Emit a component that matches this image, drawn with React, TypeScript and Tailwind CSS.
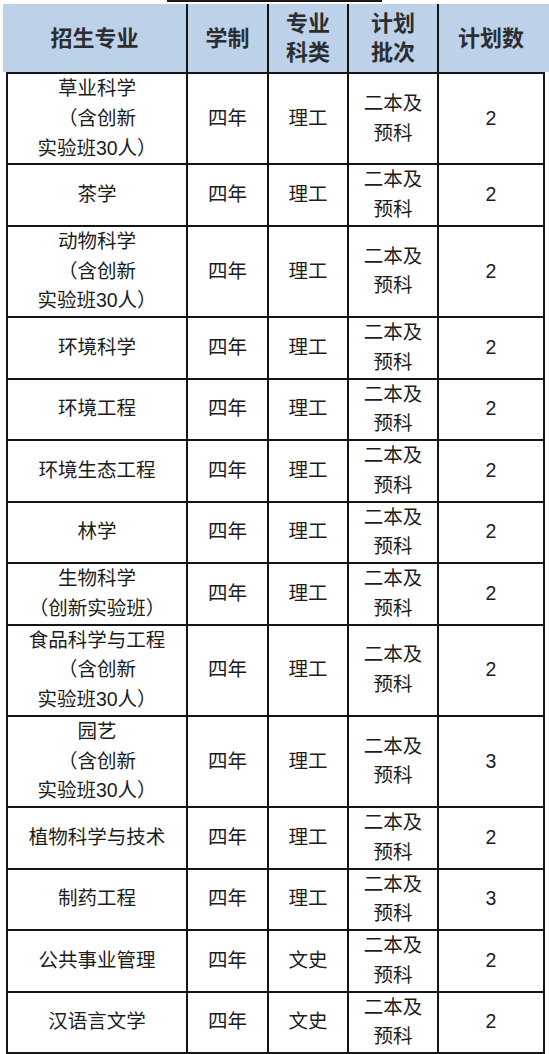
import React from 'react';

// 招生计划表（宽549，高1054）
const FONT = '"Liberation Sans", "Noto Sans CJK SC", sans-serif';

interface Row {
  name: string[];
  years: string;
  category: string;
  count: string;
}

const ROWS: Row[] = [
  { name: ['草业科学', '（含创新', '实验班30人）'], years: '四年', category: '理工', count: '2' },
  { name: ['茶学'], years: '四年', category: '理工', count: '2' },
  { name: ['动物科学', '（含创新', '实验班30人）'], years: '四年', category: '理工', count: '2' },
  { name: ['环境科学'], years: '四年', category: '理工', count: '2' },
  { name: ['环境工程'], years: '四年', category: '理工', count: '2' },
  { name: ['环境生态工程'], years: '四年', category: '理工', count: '2' },
  { name: ['林学'], years: '四年', category: '理工', count: '2' },
  { name: ['生物科学', '（创新实验班）'], years: '四年', category: '理工', count: '2' },
  { name: ['食品科学与工程', '（含创新', '实验班30人）'], years: '四年', category: '理工', count: '2' },
  { name: ['园艺', '（含创新', '实验班30人）'], years: '四年', category: '理工', count: '3' },
  { name: ['植物科学与技术'], years: '四年', category: '理工', count: '2' },
  { name: ['制药工程'], years: '四年', category: '理工', count: '3' },
  { name: ['公共事业管理'], years: '四年', category: '文史', count: '2' },
  { name: ['汉语言文学'], years: '四年', category: '文史', count: '2' },
];

function Cell({ w, children }: { w: string; children: React.ReactNode }) {
  return (
    <div className={`${w} shrink-0 flex flex-col items-center justify-center text-center border-r-2 border-[#151515]`}>
      {children}
    </div>
  );
}

export default function App() {
  return (
    <div className="w-[549px] min-h-[1054px] bg-white text-[#1c1c1c]" style={{ fontFamily: FONT }}>
      {/* top edge: only a short rule above the header */}
      <div className="h-[4px] flex items-start">
        <div className="ml-[167px] w-[215px] h-[2px] bg-[#1a1a1a]" />
      </div>

      {/* header */}
      <div className="flex ml-[3px] h-[68px] bg-[#bdd2e8] text-[22px] leading-[29px] font-semibold text-[#2b2d30]">
        <Cell w="w-[185px]">招生专业</Cell>
        <Cell w="w-[81px]">学制</Cell>
        <Cell w="w-[80px]">
          <span>专业</span>
          <span>科类</span>
        </Cell>
        <Cell w="w-[90px]">
          <span>计划</span>
          <span>批次</span>
        </Cell>
        <div className="w-[104px] shrink-0 flex items-center justify-center">计划数</div>
      </div>

      {/* body */}
      <div className="ml-[6px] w-[539px] border-l-2 border-t-2 border-[#151515] text-[19.5px] leading-[29.75px]">
        {ROWS.map((r, i) => (
          <div key={i} className="flex border-b-2 border-[#151515]">
            <Cell w="w-[180px]">
              {r.name.map((l, j) => (
                <span key={j} className="whitespace-nowrap">
                  {l}
                </span>
              ))}
            </Cell>
            <Cell w="w-[81px]">{r.years}</Cell>
            <Cell w="w-[80px]">{r.category}</Cell>
            <Cell w="w-[90px]">
              <span>二本及</span>
              <span>预科</span>
            </Cell>
            <Cell w="w-[106px]">{r.count}</Cell>
          </div>
        ))}
      </div>
    </div>
  );
}
